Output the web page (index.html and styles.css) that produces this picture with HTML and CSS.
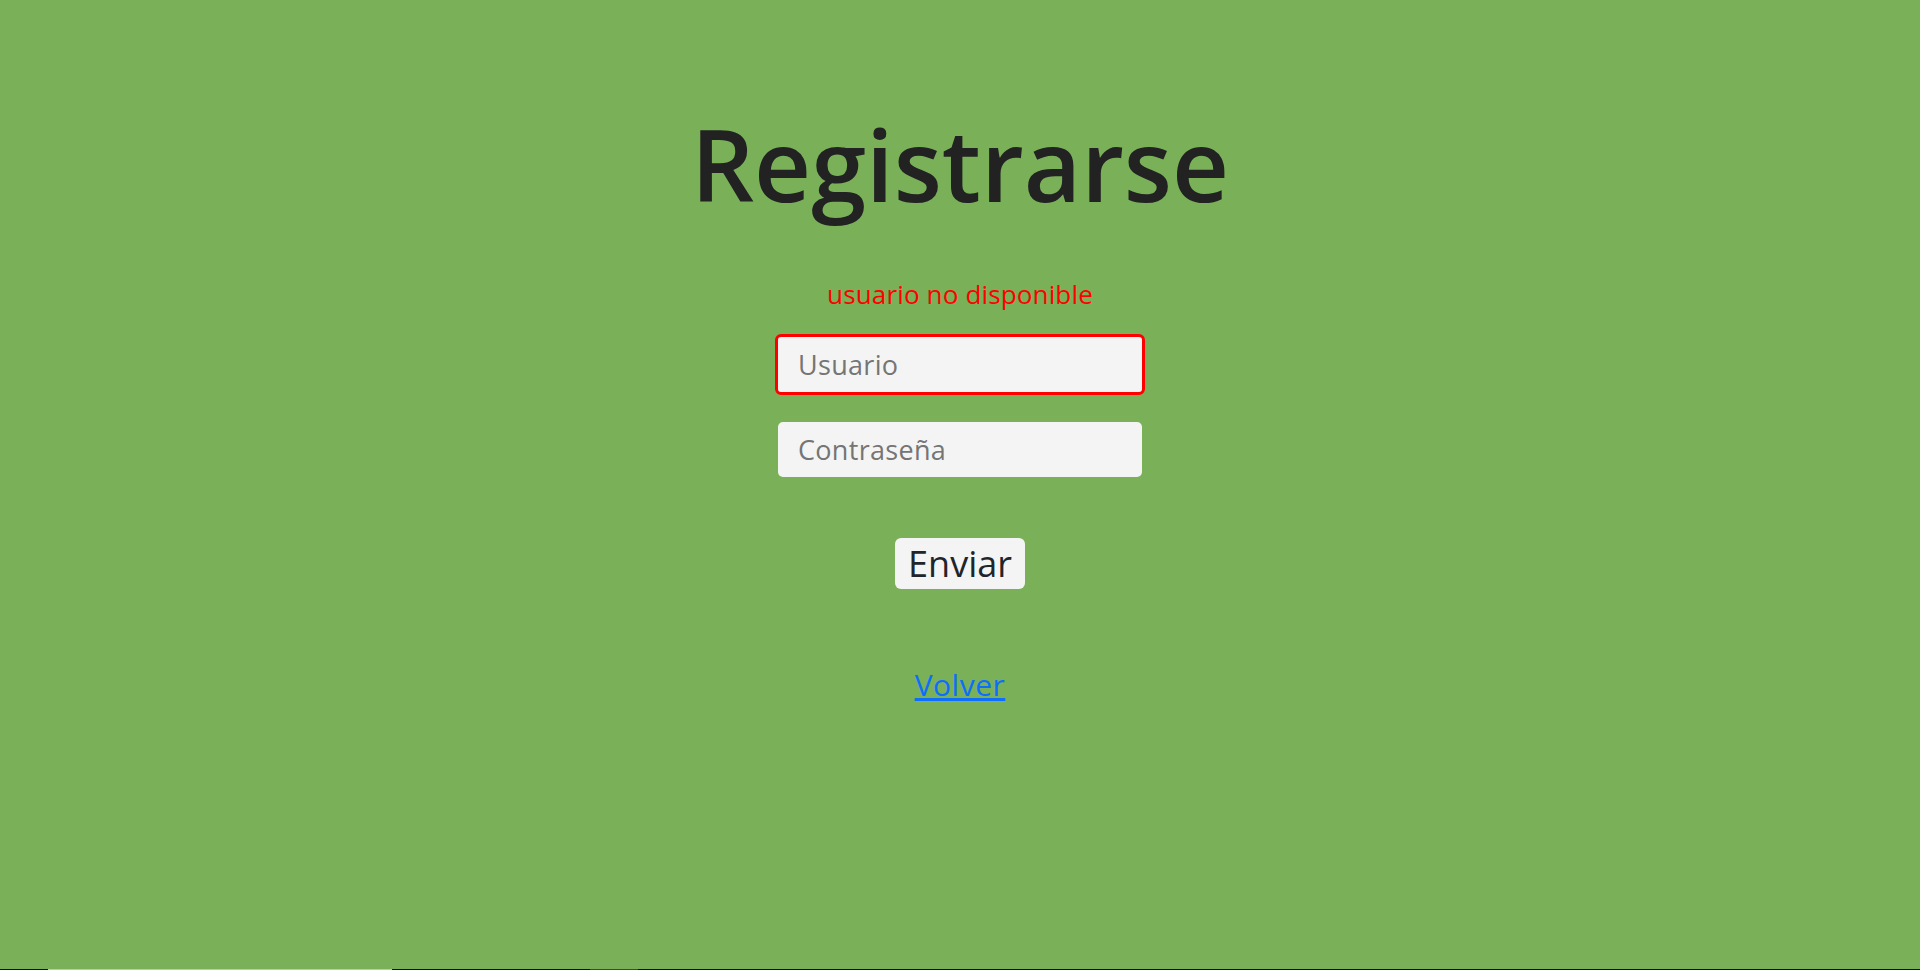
FILE: index.html
```html
<!DOCTYPE html>
<html lang="es">
<head>
<meta charset="utf-8">
<title>Registrarse</title>
<link rel="stylesheet" href="styles.css">
</head>
<body>
<main class="page">
  <h1 class="title">Registrarse</h1>
  <form class="form">
    <p class="error">usuario no disponible</p>
    <input class="field field--error" type="text" placeholder="Usuario">
    <input class="field" type="password" placeholder="Contraseña">
    <button class="submit" type="button">Enviar</button>
  </form>
  <a class="back" href="#">Volver</a>
</main>
<div class="edge"><span class="edge__a"></span><span class="edge__b"></span></div>
</body>
</html>
```

FILE: styles.css
```css
* { box-sizing: border-box; }
html, body { margin: 0; padding: 0; }
body {
  background: #7ab158;
  font-family: "Open Sans", "Liberation Sans", sans-serif;
  color: #212529;
  height: 970px;
  overflow: hidden;
  display: flex;
  flex-direction: column;
}
.page {
  flex: 1;
  display: flex;
  flex-direction: column;
  align-items: center;
  padding-top: 104px;
}
.title {
  margin: 0;
  font-size: 99px;
  font-weight: 600;
  line-height: 120px;
  letter-spacing: 0;
  color: #222;
}
.form {
  display: flex;
  flex-direction: column;
  align-items: center;
  margin-top: 53px;
}
.error {
  margin: 0 0 23px;
  color: #ff0000;
  font-size: 26px;
  line-height: 34px;
  font-weight: 400;
  letter-spacing: 0.15px;
}
.field {
  width: 364px;
  height: 55px;
  border: none;
  border-radius: 5px;
  background: #f4f4f4;
  padding: 0 20px;
  font-family: inherit;
  font-size: 27px;
  letter-spacing: 0.3px;
  color: #212529;
  outline: none;
}
.field::placeholder { color: #757575; }
.field--error {
  width: 370px;
  height: 61px;
  border: 3px solid #ff0000;
  border-radius: 6px;
  margin-bottom: 27px;
}
.submit {
  margin-top: 61px;
  width: 130px;
  height: 51px;
  border: none;
  border-radius: 6px;
  background: #f4f4f4;
  font-family: inherit;
  font-size: 36px;
  line-height: 51px;
  color: #212529;
  padding: 0;
}
.back {
  margin-top: 76px;
  font-size: 30px;
  line-height: 40px;
  letter-spacing: 0.5px;
  color: #0d6efd;
  text-decoration: underline;
}
.edge {
  height: 1px;
  background: #111;
  display: flex;
}
.edge__a { margin-left: 48px; width: 344px; background: #c4c4c4; }
.edge__b { margin-left: 198px; width: 48px; background: #444; }
```
